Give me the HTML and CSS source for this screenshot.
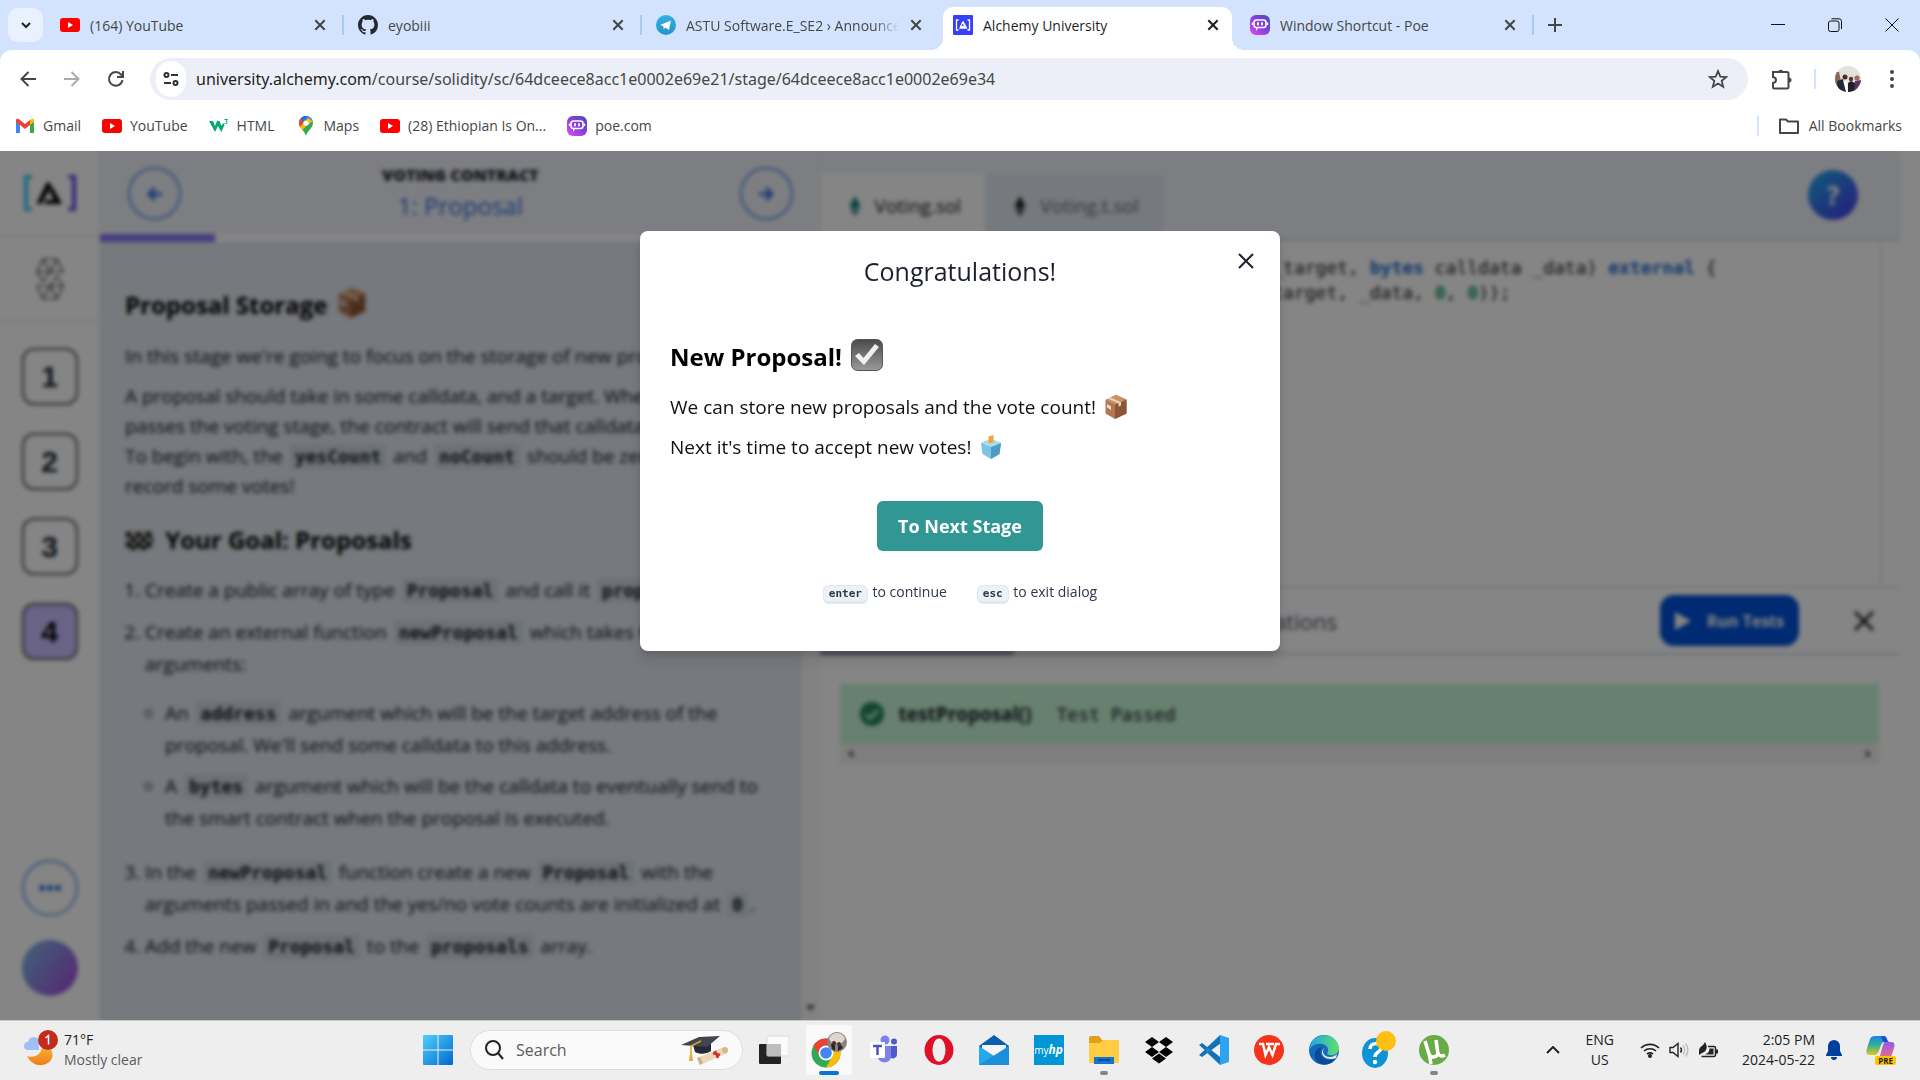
FILE: index.html
```html
<!DOCTYPE html>
<html lang="en">
<head>
<meta charset="utf-8">
<title>Alchemy University</title>
<link rel="stylesheet" href="styles.css">
</head>
<body>
<svg class="defs" aria-hidden="true">
  <defs>
    <linearGradient id="gPoe" x1="0" y1="1" x2="1" y2="0"><stop offset="0" stop-color="#e24bf5"/><stop offset=".5" stop-color="#8a3fe0"/><stop offset="1" stop-color="#4b49b8"/></linearGradient>
    <linearGradient id="gTg" x1="0" y1="0" x2="0" y2="1"><stop offset="0" stop-color="#37aee2"/><stop offset="1" stop-color="#1e96c8"/></linearGradient>
    <linearGradient id="gWin" x1="0" y1="0" x2="1" y2="1"><stop offset="0" stop-color="#4fd0fb"/><stop offset="1" stop-color="#0069d0"/></linearGradient>
    <linearGradient id="gBrk" x1="0" y1="0" x2="1" y2="0"><stop offset="0" stop-color="#35c8f5"/><stop offset="1" stop-color="#5a45e8"/></linearGradient>
    <linearGradient id="gMoon" x1="0" y1="0" x2="0" y2="1"><stop offset="0" stop-color="#f7b733"/><stop offset="1" stop-color="#ef7c1c"/></linearGradient>
    <linearGradient id="gCheck" x1="0" y1="0" x2="0" y2="1"><stop offset="0" stop-color="#4a4a4a"/><stop offset="1" stop-color="#9a9a9a"/></linearGradient>
    <linearGradient id="gEdge" x1="0" y1="0" x2="1" y2="0"><stop offset="0" stop-color="#1fa6e8"/><stop offset="1" stop-color="#5fe06a"/></linearGradient>
    <linearGradient id="gCopA" x1="0" y1="0" x2="0" y2="1"><stop offset="0" stop-color="#1583e8"/><stop offset=".5" stop-color="#35b58e"/><stop offset="1" stop-color="#e3c61b"/></linearGradient>
    <linearGradient id="gCopB" x1="0" y1="0" x2="0" y2="1"><stop offset="0" stop-color="#9a58e8"/><stop offset="1" stop-color="#f7746b"/></linearGradient>
    <symbol id="yt" viewBox="0 0 20 20"><rect y="3" width="20" height="14" rx="3" fill="#f00"/><path d="M8 7v6l5-3z" fill="#fff"/></symbol>
    <symbol id="poe" viewBox="0 0 20 20"><rect width="20" height="20" rx="6" fill="url(#gPoe)"/><rect x="4" y="5" width="12" height="7.500" rx="2.500" fill="none" stroke="#fff" stroke-width="1.600"/><path d="M2.500 7.500v2.500M17.500 7.500v2.500" stroke="#fff" stroke-width="1.400"/><path d="M6 12.500h8l-6 .5-2 3z" fill="#fff"/><path d="M8 8v1.500M12 8v1.500" stroke="#fff" stroke-width="1.800" stroke-linecap="round"/></symbol>
    <symbol id="x" viewBox="0 0 12 12"><path d="M2 2l8 8M10 2l-8 8" stroke="currentColor" stroke-width="1.800"/></symbol>
    <symbol id="package" viewBox="0 0 24 24"><path d="M12 0l10.500 4.500v14L11 24 1.500 18.500V5z" fill="#b27650"/><path d="M11 9.500L22.500 4.500v14L11 24z" fill="#8c5634"/><path d="M12 0l10.500 4.500L11 9.500 1.500 5z" fill="#c99264"/><path d="M6.500 2.500L17 7l-2.500 1.200L4 3.700zM14.500 8.200L17 7v3.600l-2.500 1.200z" fill="#e8d2b0"/><path d="M3 9l4 2.300v3.600L3 12.600z" fill="#e6e0da"/></symbol>
    <symbol id="ballot" viewBox="0 0 24 24"><path d="M12 4l10 4-1.500 11L12 24l-8.500-5L2 8z" fill="#7cc3e4"/><path d="M12 12L22 8l-1.500 11L12 24z" fill="#4c9cc9"/><path d="M12 4l10 4-10 4L2 8z" fill="#a9dcf2"/><path d="M9.500 1.500L14.500 0v7.500l-5 1z" fill="#f0a52e"/></symbol>
    <symbol id="flag" viewBox="0 0 30 24"><path d="M1 3c5-3 9 3 14 0s9-1 13 0v17c-5-2-8 2-13 0s-9-1-13 2z" fill="#bbb"/><path d="M1 3h5v5H1zM11 3h5v5h-5zM21 3h5v5h-5zM6 8h5v5H6zM16 8h5v5h-5zM1 13h5v5H1zM11 13h5v5h-5zM21 13h5v5h-5zM6 17h5v4H6zM16 17h5v4h-5zM26 8h2v5h-2z" fill="#111"/></symbol>
    <symbol id="eth" viewBox="0 0 14 22"><path d="M7 0l6 11-6 4-6-4zM1 13l6 9 6-9-6 3.500z" fill="currentColor"/></symbol>
  </defs>
</svg>

<header class="browser">
  <div class="tabstrip">
    <button class="tab-search" aria-label="Search tabs"><svg width="12" height="12" viewBox="0 0 12 12"><path d="M2 4l4 4 4-4" fill="none" stroke="#1f1f1f" stroke-width="2"/></svg></button>
    <div class="tab"><svg class="fav"><use href="#yt"/></svg><span class="tab-title">(164) YouTube</span><button class="tab-close" aria-label="Close tab"><svg width="14" height="14"><use href="#x"/></svg></button></div>
    <div class="tab"><svg class="fav" viewBox="0 0 16 16"><path fill="#24292f" d="M8 0C3.580 0 0 3.580 0 8c0 3.540 2.290 6.530 5.470 7.590.4.070.55-.17.55-.38 0-.19-.01-.82-.01-1.490-2.010.37-2.530-.49-2.690-.94-.09-.23-.48-.94-.82-1.130-.28-.15-.68-.52-.01-.53.63-.01 1.080.58 1.230.82.72 1.210 1.870.87 2.330.66.07-.52.28-.87.51-1.070-1.780-.2-3.640-.89-3.640-3.950 0-.87.31-1.590.82-2.150-.08-.2-.36-1.020.08-2.120 0 0 .67-.21 2.200.82.64-.18 1.320-.27 2-.27s1.360.09 2 .27c1.530-1.040 2.200-.82 2.200-.82.44 1.100.16 1.920.08 2.120.51.56.82 1.270.82 2.150 0 3.070-1.870 3.750-3.650 3.950.29.25.54.73.54 1.480 0 1.070-.01 1.930-.01 2.200 0 .21.15.46.55.38A8.010 8.010 0 0 0 16 8c0-4.420-3.580-8-8-8z"/></svg><span class="tab-title">eyobiii</span><button class="tab-close" aria-label="Close tab"><svg width="14" height="14"><use href="#x"/></svg></button></div>
    <div class="tab bare"><svg class="fav" viewBox="0 0 20 20"><circle cx="10" cy="10" r="10" fill="url(#gTg)"/><path d="M4 10l11-4.500-2 9.500-3.500-2.500-1.800 1.800-.4-3.300z" fill="#fff"/></svg><span class="tab-title fade">ASTU Software.E_SE2 › Announcements</span><button class="tab-close" aria-label="Close tab"><svg width="14" height="14"><use href="#x"/></svg></button></div>
    <div class="tab active"><svg class="fav" viewBox="0 0 20 20"><rect width="20" height="20" rx="1" fill="#363ff9"/><path d="M5.500 5H3.500v10h2M14.500 5h2v10h-2M10 6.500L7 13h6.500L10 6.500l1.800 5.200H8.500" fill="none" stroke="#fff" stroke-width="1.300"/></svg><span class="tab-title">Alchemy University</span><button class="tab-close" aria-label="Close tab"><svg width="14" height="14"><use href="#x"/></svg></button></div>
    <div class="tab"><svg class="fav"><use href="#poe"/></svg><span class="tab-title">Window Shortcut - Poe</span><button class="tab-close" aria-label="Close tab"><svg width="14" height="14"><use href="#x"/></svg></button></div>
    <button class="new-tab" aria-label="New tab"><svg width="14" height="14" viewBox="0 0 14 14"><path d="M7 0v14M0 7h14" stroke="#444746" stroke-width="2"/></svg></button>
    <div class="win-controls">
      <button aria-label="Minimize"><svg width="14" height="14"><path d="M0 6.500h14" stroke="#111"/></svg></button>
      <button aria-label="Restore"><svg width="14" height="14" fill="none" stroke="#111"><rect x=".5" y="3" width="10.500" height="10.500" rx="2"/><path d="M3.500 .8H11a2.500 2.500 0 0 1 2.500 2.500V11"/></svg></button>
      <button aria-label="Close"><svg width="14" height="14"><path d="M.5 .5l13 13M13.500 .5l-13 13" stroke="#111"/></svg></button>
    </div>
  </div>
  <div class="toolbar">
    <button class="tool" aria-label="Back"><svg width="16" height="16" viewBox="0 0 16 16" fill="none" stroke="#444746" stroke-width="2"><path d="M16 8H2M8.500 1L1.500 8l7 7"/></svg></button>
    <button class="tool" aria-label="Forward"><svg width="16" height="16" viewBox="0 0 16 16" fill="none" stroke="#a9abad" stroke-width="2"><path d="M0 8h14M7.500 1l7 7-7 7"/></svg></button>
    <button class="tool" aria-label="Reload"><svg width="18" height="18" viewBox="0 0 18 18" fill="none" stroke="#444746" stroke-width="2"><path d="M15.500 10A6.800 6.800 0 1 1 14 4.500l1.500 2M16 1v6h-6"/></svg></button>
    <div class="omnibox">
      <button class="site-info" aria-label="Site information"><svg width="16" height="16" viewBox="0 0 16 16" fill="none" stroke="#303134" stroke-width="2"><circle cx="3.500" cy="4" r="2"/><path d="M8 4h7M1 12h7"/><circle cx="12.500" cy="12" r="2"/></svg></button>
      <span class="url"><b>university.alchemy.com</b>/course/solidity/sc/64dceece8acc1e0002e69e21/stage/64dceece8acc1e0002e69e34</span>
      <button class="star" aria-label="Bookmark this tab"><svg width="20" height="20" viewBox="0 0 20 20"><path d="M10 2l2.300 5.600 6 .4-4.600 3.900 1.500 5.900L10 14.600l-5.200 3.200 1.500-5.900L1.700 8l6-.4z" fill="none" stroke="#444746" stroke-width="1.800"/></svg></button>
    </div>
    <button class="tool ext" aria-label="Extensions"><svg width="22" height="24" viewBox="0 0 22 24"><path d="M2 5h14a1.500 1.500 0 0 1 1.500 1.500V20a1.500 1.500 0 0 1-1.500 1.500H3A1 1 0 0 1 2 20.500V16c4-.5 4-5.500 0-6z" fill="none" stroke="#444746" stroke-width="2"/><path d="M7 4.500a3 3 0 0 1 5.500 0zM18 10.500a2.500 2.500 0 0 1 0 5z" fill="#444746"/></svg></button>
    <span class="sep"></span>
    <button class="tool" aria-label="Profile"><svg width="26" height="26" viewBox="0 0 26 26"><clipPath id="av"><circle cx="13" cy="13" r="13"/></clipPath><g clip-path="url(#av)"><rect width="26" height="26" fill="#e4e0dd"/><path d="M0 6h4l2 9v11H0z" fill="#8a665a"/><path d="M2 15l6-2 4 13H3z" fill="#23283a"/><path d="M13 17l3-2 4 2v9h-7z" fill="#1c2130"/><path d="M20 15l6-1v12h-7z" fill="#5a3558"/><path d="M8 14l2 2 2-2 1 12h-2z" fill="#fff"/><circle cx="10" cy="11" r="2.500" fill="#4a2d24"/><circle cx="16" cy="13" r="2.200" fill="#54352b"/><circle cx="22" cy="12" r="2.600" fill="#a06a5c"/></g></svg></button>
    <button class="tool" aria-label="Menu"><svg width="4" height="18" fill="#444746"><circle cx="2" cy="2" r="2"/><circle cx="2" cy="9" r="2"/><circle cx="2" cy="16" r="2"/></svg></button>
  </div>
  <nav class="bookmarks">
    <a href="#"><svg class="bm" viewBox="0 0 20 20"><path d="M1 4.500V17h4V8.500z" fill="#4285f4"/><path d="M19 4.500V17h-4V8.500z" fill="#34a853"/><path d="M1 4.500C1 2.500 3 2.300 5 4l5 4 5-4v5l-5 4-5-4L1 6z" fill="#ea4335"/><path d="M15 4c2-1.700 4-1.500 4 .5V6l-4 3z" fill="#fbbc04"/></svg>Gmail</a>
    <a href="#"><svg class="bm"><use href="#yt"/></svg>YouTube</a>
    <a href="#"><svg class="bm" viewBox="0 0 20 20"><path d="M0 5h4l2 5 2-5h2.500l2 5 1.500-3 1.500 2-3.200 7-3.300-6-3 6z" fill="#04aa6d"/><path d="M15.500 3.500h3l-1.500 2c2.200.2 1.500 3-1.500 2" fill="none" stroke="#04aa6d"/></svg>HTML</a>
    <a href="#"><svg class="bm" viewBox="0 0 20 20"><path d="M10 20C9 15 3 12 3 7a7 7 0 0 1 14 0c0 5-6 8-7 13z" fill="#34a853"/><path d="M10 0a7 7 0 0 1 6.500 4.500L10 12z" fill="#4285f4"/><path d="M4.500 2.500A7 7 0 0 1 12 .3L7 6z" fill="#1a73e8"/><path d="M4.500 2.500L8 6l-4 5C2.500 8 2.500 5 4.500 2.500z" fill="#ea4335"/><path d="M4 11l8-9 4.500 3L6 14z" fill="#fbbc04"/><circle cx="10" cy="7" r="2.600" fill="#fff"/></svg>Maps</a>
    <a href="#"><svg class="bm"><use href="#yt"/></svg>(28) Ethiopian Is On...</a>
    <a href="#"><svg class="bm"><use href="#poe"/></svg>poe.com</a>
    <a href="#" class="all"><svg class="bm" viewBox="0 0 20 20"><path d="M1 3.500h6l2 2h10V17H1z" fill="none" stroke="#444746" stroke-width="2" stroke-linejoin="round"/></svg>All Bookmarks</a>
  </nav>
</header>

<main class="page">
  <aside class="rail">
    <a class="rail-cell" href="#" aria-label="Alchemy"><svg width="52" height="36" viewBox="0 0 52 36"><path d="M8 1.500H2v33h6M44 1.500h6v33h-6" fill="none" stroke="url(#gBrk)" stroke-width="4"/><path d="M26 7l-3.500 1L12.500 29h5L27 12zM28 11l10 18H20l2-4h8l-4.500-9z" fill="#000"/></svg></a>
    <div class="rail-cell"><svg width="28" height="42" viewBox="0 0 28 42" fill="none" stroke="#333" stroke-width="1.200"><path d="M7 1h14l6 13H1zM1 14l6 10L14 14 7 1M14 14l7-13M7 1l7 13h13M1 28h26l-6 13H7zM27 28l-6-10-7 10 7 13M14 28L7 41"/></svg></div>
    <button class="step">1</button>
    <button class="step">2</button>
    <button class="step">3</button>
    <button class="step current">4</button>
    <button class="more" aria-label="More"><svg width="24" height="8" fill="#2b6de0"><circle cx="4" cy="4" r="3"/><circle cx="12" cy="4" r="3"/><circle cx="20" cy="4" r="3"/></svg></button>
    <button class="account" aria-label="Account"></button>
  </aside>

  <section class="lesson">
    <header class="lesson-head">
      <button class="round" aria-label="Previous"><svg width="16" height="16" viewBox="0 0 16 16" fill="none" stroke="currentColor" stroke-width="3"><path d="M15 8H3M8 2L2 8l6 6"/></svg></button>
      <div class="lesson-title"><p class="eyebrow">VOTING CONTRACT</p><h1>1: Proposal</h1></div>
      <button class="round" aria-label="Next"><svg width="16" height="16" viewBox="0 0 16 16" fill="none" stroke="currentColor" stroke-width="3"><path d="M1 8h12M8 2l6 6-6 6"/></svg></button>
    </header>
    <div class="progress"><div class="progress-bar"></div></div>
    <div class="lesson-body">
      <article>
        <h2>Proposal Storage <svg class="after" width="30" height="30"><use href="#package"/></svg></h2>
        <p>In this stage we're going to focus on the storage of new proposals.</p>
        <p>A proposal should take in some calldata, and a target. When a proposal<br>passes the voting stage, the contract will send that calldata on.<br>To begin with, the <code>yesCount</code> and <code>noCount</code> should be zero until we<br>record some votes!</p>
        <h2><svg class="before" width="30" height="24"><use href="#flag"/></svg> Your Goal: Proposals</h2>
        <ol>
          <li>Create a public array of type <code>Proposal</code> and call it <code>proposals</code>.</li>
          <li>Create an external function <code>newProposal</code> which takes two<br>arguments:
            <ul>
              <li>An <code>address</code> argument which will be the target address of the<br>proposal. We'll send some calldata to this address.</li>
              <li>A <code>bytes</code> argument which will be the calldata to eventually send to<br>the smart contract when the proposal is executed.</li>
            </ul>
          </li>
          <li>In the <code>newProposal</code> function create a new <code>Proposal</code> with the<br>arguments passed in and the yes/no vote counts are initialized at <code>0</code>.</li>
          <li>Add the new <code>Proposal</code> to the <code>proposals</code> array.</li>
        </ol>
      </article>
      <div class="track"><svg width="9" height="6" fill="#505050"><path d="M0 0h9L4.500 6z"/></svg></div>
    </div>
  </section>

  <section class="workbench">
    <header class="files">
      <button class="file open"><svg width="14" height="20"><use href="#eth"/></svg>Voting.sol</button>
      <button class="file"><svg width="14" height="20"><use href="#eth"/></svg>Voting.t.sol</button>
      <button class="help" aria-label="Help">?</button>
    </header>
    <pre class="editor">    function newProposal(address _target, <b>bytes</b> calldata _data) <b>external</b> {
        proposals.push(Proposal(_target, _data, <i>0</i>, <i>0</i>));
    }</pre>
    <div class="console-head">
      <button class="ctab selected">Tests</button>
      <button class="ctab">Explanations</button>
      <button class="run"><svg width="16" height="18" fill="#fff"><path d="M0 0l16 9-16 9z"/></svg>Run Tests</button>
      <button class="console-close" aria-label="Close console"><svg width="20" height="20"><path d="M1 1l18 18M19 1L1 19" stroke="#222" stroke-width="3"/></svg></button>
    </div>
    <div class="results">
      <div class="result"><svg width="24" height="24"><circle cx="12" cy="12" r="12" fill="#25855a"/><path d="M6 12.500l4 4 8-8" fill="none" stroke="#c6f6d5" stroke-width="3"/></svg><strong>testProposal()</strong><span>Test Passed</span></div>
      <div class="hscroll"><svg width="5" height="8" fill="#555"><path d="M5 0v8L0 4z"/></svg><svg width="5" height="8" fill="#555"><path d="M0 0v8l5-4z"/></svg></div>
    </div>
  </section>

  <div class="overlay">
    <section class="modal" role="dialog" aria-labelledby="dlg">
      <button class="modal-close" aria-label="Close"><svg width="16" height="16"><path d="M1 1l14 14M15 1L1 15" stroke="#1a202c" stroke-width="2"/></svg></button>
      <h2 id="dlg" class="modal-title">Congratulations!</h2>
      <h3>New Proposal! <svg class="after" width="32" height="32" viewBox="0 0 32 32"><rect x=".5" y=".5" width="31" height="31" rx="6" fill="url(#gCheck)" stroke="#555"/><path d="M4 17l4-3 4.500 5L24 5l4 3-15 18z" fill="#f0f0f0"/></svg></h3>
      <p>We can store new proposals and the vote count! <svg class="after" width="24" height="24"><use href="#package"/></svg></p>
      <p>Next it's time to accept new votes! <svg class="after" width="24" height="24"><use href="#ballot"/></svg></p>
      <button class="next">To Next Stage</button>
      <div class="hints"><span><kbd>enter</kbd> to continue</span><span><kbd>esc</kbd> to exit dialog</span></div>
    </section>
  </div>
</main>

<footer class="taskbar">
  <div class="weather">
    <svg width="36" height="40" viewBox="0 0 36 40"><path d="M3 26c3 2 14 1 15-9 7-3 14 6 9 13s-18 8-24-4z" fill="url(#gMoon)"/><path d="M4 20a4 4 0 0 1 0-8 6 6 0 0 1 11-2v10z" fill="#9fc0f3"/><circle cx="24" cy="10" r="10" fill="#c42b1c"/><path d="M21.500 8L24.500 5.500V14.500" fill="none" stroke="#fff" stroke-width="1.500"/></svg>
    <div class="weather-text"><span>71°F</span><span class="muted">Mostly clear</span></div>
  </div>
  <div class="dock">
    <button class="app" aria-label="Start"><svg width="30" height="30" fill="url(#gWin)"><path d="M0 1a1 1 0 0 1 1-1h28a1 1 0 0 1 1 1v28a1 1 0 0 1-1 1H1a1 1 0 0 1-1-1z"/><path d="M14.500 0h1v30h-1zM0 14.500h30v1H0z" fill="#eee"/></svg></button>
    <label class="search"><svg width="20" height="20" fill="none" stroke="#222" stroke-width="2"><circle cx="9" cy="8" r="7"/><path d="M14 13l5 6"/></svg><input type="text" placeholder="Search" aria-label="Search">
      <svg width="48" height="32" viewBox="0 0 48 32"><path d="M12 11l2 7c5 3 12 2 16-1V9z" fill="#262a33"/><path d="M0 11L18 3l21-1-13 11z" fill="#41454f"/><path d="M20 7L10 12v12" fill="none" stroke="#e0a42a" stroke-width="1.500"/><path d="M9 20l2 0 1 7H8z" fill="#e7ac2d"/><path d="M16 24l27-11 4 6-28 12z" fill="#ead9b9"/><path d="M16 24l3-1 3 6-3 2z" fill="#cbb184"/><circle cx="44" cy="16" r="3" fill="#d3b88e"/><path d="M34 17l3 7M32 19l7 2" stroke="#d92c2c" stroke-width="2.500"/></svg></label>
    <button class="app" aria-label="Task view"><svg width="30" height="30"><rect y="9" width="22" height="20" rx="1" fill="#222"/><rect x="8" y="1" width="22" height="20" rx="1" fill="#fafafa" stroke="#ddd"/><path d="M8 9h14v12H8z" fill="#bdbdbd"/></svg></button>
    <button class="app focused" aria-label="Chrome"><svg width="36" height="36" viewBox="0 0 36 36"><circle cx="15" cy="21" r="14.500" fill="#34a853"/><path d="M2.400 13.800A14.500 14.500 0 0 1 27.600 13.800H15L8.800 24.500z" fill="#ea4335"/><path d="M27.600 13.800A14.500 14.500 0 0 1 15 35.500l6.300-11L22 14z" fill="#fbbc04"/><circle cx="15" cy="21" r="7.500" fill="#fff"/><circle cx="15" cy="21" r="5.800" fill="#4285f4"/><circle cx="26" cy="10" r="10" fill="#8b807b"/><path d="M18 7c2-8 14-8 16 0l-3 4H21z" fill="#dbd6d2"/><path d="M20 12h4v7l-3-2zM27 13h3l2 3-5 3z" fill="#222634"/><circle cx="23" cy="11" r="2" fill="#4a2d24"/><circle cx="28" cy="12" r="2" fill="#54352b"/></svg></button>
    <button class="app" aria-label="Teams"><svg width="28" height="30" viewBox="0 0 28 30"><circle cx="15" cy="5" r="4.500" fill="#7b83eb"/><circle cx="24" cy="6.500" r="3" fill="#5059c9"/><path d="M19 11h8v9a4 4 0 0 1-7 2z" fill="#5059c9"/><path d="M8 11h13v12a7 7 0 0 1-13 0z" fill="#7b83eb"/><rect y="7" width="15" height="16" rx="1" fill="#fff"/><path d="M3 11h9M7.500 11v9" stroke="#4b53bc" stroke-width="2.500"/></svg></button>
    <button class="app" aria-label="Opera"><svg width="30" height="30"><ellipse cx="15" cy="15" rx="14.500" ry="15" fill="#e0102a"/><ellipse cx="15" cy="15" rx="6.500" ry="11.500" fill="#eee"/></svg></button>
    <button class="app" aria-label="Mail"><svg width="30" height="30"><path d="M0 11L15 0l15 11v4H0z" fill="#0a5fb0"/><path d="M3 10h24v10H3z" fill="#f5f5f5"/><path d="M0 11l15 10 15-10v19H0z" fill="#27a8ea"/><path d="M0 30L30 11v19z" fill="#1b8fdc"/></svg></button>
    <button class="app hp" aria-label="myHP"><span>my<em>hp</em></span></button>
    <button class="app running" aria-label="File Explorer"><svg width="30" height="30"><path d="M0 3a2 2 0 0 1 2-2h8l3 4h17v23H0z" fill="#e0a019"/><path d="M0 8h11l3-3h16v23H0z" fill="#ffcc44"/><path d="M5 22h20v7H5z" fill="#1672cf"/><path d="M9 25h12" stroke="#0b4f9c" stroke-width="2"/></svg></button>
    <button class="app" aria-label="Dropbox"><svg width="30" height="28" fill="#000"><path d="M8 1l7 5-7 5-7-5zM22 1l7 5-7 5-7-5zM8 11l7 5-7 5-7-5zM22 11l7 5-7 5-7-5zM15 17.500l7 5-7 5-7-5z"/></svg></button>
    <button class="app" aria-label="Visual Studio Code"><svg width="30" height="30"><path d="M21 0L5 15l16 15v-8l-9-7 9-7z" fill="#1b84cc"/><path d="M0 10l3-2 19 15v6zM0 20l3 2L22 8V1z" fill="#1470b3"/><path d="M21 0l9 3v24l-9 3z" fill="#2fa4ee"/></svg></button>
    <button class="app" aria-label="WPS Office"><svg width="30" height="30"><circle cx="15" cy="15" r="15" fill="#f5351b"/><path d="M5 9h4l2.500 11L15 12l3.500 8L22 9h4M12 9h8" fill="none" stroke="#fff" stroke-width="2.500"/></svg></button>
    <button class="app" aria-label="Edge"><svg width="30" height="30"><circle cx="15" cy="15" r="15" fill="#1569bd"/><path d="M1 11C5-3 27-4 30 13c0 7-8 9-12 6 3-5 0-9-5-10S3 10 1 14z" fill="url(#gEdge)"/><path d="M13 12c-4 6 0 14 9 13 2 0 4-1 5-2-5 8-16 8-20 2-3-6 0-12 6-13z" fill="#0b4a95"/><path d="M16 13c-4 2-2 9 5 9 3 0 6-2 7-3l-1 4c-5 2-13 1-14-5 0-3 1-4 3-5z" fill="#eee"/></svg></button>
    <button class="app" aria-label="HP Support"><svg width="36" height="38" viewBox="0 0 36 38"><ellipse cx="14" cy="22" rx="13" ry="15" fill="#0f93d5"/><path d="M9 18c0-7 11-7 11-1 0 4-6 4-6 9" fill="none" stroke="#fff" stroke-width="3.500"/><circle cx="14" cy="31" r="2.200" fill="#fff"/><circle cx="25" cy="10" r="10" fill="#ffbf12"/></svg></button>
    <button class="app running" aria-label="uTorrent"><svg width="30" height="30"><circle cx="15" cy="15" r="15" fill="#6aab45"/><path d="M6 6l4 13c1 4 7 4 9 0L17 5M19 18c1 3 4 4 7 2M10 18l2 11" fill="none" stroke="#fff" stroke-width="3.500"/></svg></button>
  </div>
  <div class="tray">
    <svg width="14" height="8" fill="none" stroke="#222" stroke-width="2"><path d="M1 7l6-6 6 6"/></svg>
    <div class="lang"><span>ENG</span><span>US</span></div>
    <div class="status">
      <svg width="20" height="16" fill="none" stroke="#222" stroke-width="1.600"><path d="M1 6a13 13 0 0 1 18 0M4 9a9 9 0 0 1 12 0M7 12a5 5 0 0 1 6 0"/><circle cx="10" cy="14" r="1.200" fill="#222"/></svg>
      <svg width="20" height="16" fill="none" stroke="#222" stroke-width="1.400"><path d="M1 5.500h3l5-4v13l-5-4H1zM11.500 5.500a4 4 0 0 1 0 5"/><path d="M14 3.500a7 7 0 0 1 0 9M16.500 1.500a10 10 0 0 1 0 13" stroke="#bbb"/></svg>
      <svg width="20" height="18"><path d="M10 5.500h6a1.500 1.500 0 0 1 1.500 1.500v7a1.500 1.500 0 0 1-1.500 1.500H3.500" fill="none" stroke="#222" stroke-width="1.500"/><path d="M18 8.500h2v4h-2zM1 10c0-5 4-4 6-9 3 5 2 9-3 11l-3 2zM11.500 7.500h4v6H7c3-1 4.500-3 4.500-6z" fill="#222"/></svg>
    </div>
    <div class="clock"><span>2:05 PM</span><span>2024-05-22</span></div>
    <svg class="bell" width="16" height="20" fill="#003f9e"><path d="M8 0a6 6 0 0 1 6 6v5l2 4v1H0v-1l2-4V6a6 6 0 0 1 6-6zM5 17h6a3 3 0 0 1-6 0z"/></svg>
    <div class="copilot"><svg width="30" height="26" viewBox="0 0 30 26"><path d="M9 1h8c5 0 3 6 6 6h-5c-4 0-4 13-9 13H4C0 20 0 17 1 13l3-9c1-2 2-3 5-3z" fill="url(#gCopA)"/><path d="M15 1h3c3 0 3 5 5 6h-6z" fill="#1c4fd0"/><path d="M19 7h6c4 0 4 3 3 6l-3 9c-1 2-3 4-6 4H10c5 0 6-19 9-19z" fill="url(#gCopB)"/></svg><span>PRE</span></div>
  </div>
</footer>
</body>
</html>
```
FILE: styles.css
```css
* { box-sizing: border-box; }
body {
  margin: 0;
  min-height: 100vh;
  display: flex;
  flex-direction: column;
  font-family: "Open Sans", "Noto Sans", sans-serif;
  color: #1a202c;
}
button { font: inherit; color: inherit; border: 0; padding: 0; background: none; }
a { color: inherit; text-decoration: none; }
h1, h2, h3, p { margin: 0; }
svg { flex: none; }
.defs { position: absolute; width: 0; height: 0; }
.after { margin-left: 3px; }
.before { margin-right: 4px; }

/* browser */
.browser { background: #d3e3fd; color: #444746; }
.tabstrip { display: flex; align-items: center; height: 50px; padding-left: 8px; }
.tab-search { width: 35px; height: 34px; margin-right: 3px; border-radius: 10px; background: #e9f1fe; display: grid; place-items: center; }
.tab { display: flex; align-items: center; gap: 10px; width: 298px; height: 42px; padding: 0 17px 0 14px; font-size: 14px; position: relative; }
.tab::after { content: ""; position: absolute; right: 0; top: 11px; width: 2px; height: 20px; background: #a8c7fa; }
.tab.bare::after, .tab.active::after { display: none; }
.tab.active { align-self: flex-end; width: 289px; height: 43px; margin: 0 4px 0 3px; padding: 0 12px 7px 10px; border-radius: 10px 10px 0 0; background: #fff; color: #1f1f1f; }
.tab.active::before { content: ""; position: absolute; left: -12px; right: -12px; bottom: 0; height: 12px; background: radial-gradient(circle at 0 0, transparent 12px, #fff 12px) left / 12px 12px no-repeat, radial-gradient(circle at 100% 0, transparent 12px, #fff 12px) right / 12px 12px no-repeat; }
.fav { width: 20px; height: 20px; }
.tab-title { flex: 1; overflow: hidden; white-space: nowrap; }
.tab-title.fade { -webkit-mask: linear-gradient(90deg, #000 88%, transparent); mask: linear-gradient(90deg, #000 88%, transparent); }
.tab-close { width: 14px; height: 14px; display: grid; }
.new-tab { width: 42px; display: grid; place-items: center; }
.win-controls { margin-left: auto; display: flex; }
.win-controls button { width: 57px; height: 34px; display: grid; place-items: center; }
.toolbar { display: flex; align-items: center; height: 58px; padding: 0 6px; background: #fff; border-radius: 12px 12px 0 0; }
.tool { width: 44px; height: 40px; display: grid; place-items: center; }
.omnibox { flex: 1; display: flex; align-items: center; height: 42px; margin-left: 12px; padding: 0 20px 0 6px; border-radius: 21px; background: #edeff8; }
.site-info { width: 30px; height: 36px; border-radius: 18px; background: #fff; display: grid; place-items: center; }
.url { margin-left: 10px; font-family: "Noto Sans", sans-serif; font-size: 16px; flex: 1; white-space: nowrap; overflow: hidden; }
.url b { font-weight: 400; color: #1f1f1f; }
.star { width: 20px; height: 20px; }
.ext { margin-left: 12px; }
.sep { width: 2px; height: 20px; margin: 0 10px; background: #d3e3fd; }
.bookmarks { display: flex; align-items: center; gap: 21px; height: 43px; padding: 0 18px 8px 15px; background: #fff; font-size: 14px; white-space: nowrap; }
.bookmarks a { display: flex; align-items: center; gap: 8px; }
.bm { width: 20px; height: 20px; }
.bookmarks .all { margin-left: auto; gap: 10px; padding-left: 20px; border-left: 2px solid #d3e3fd; }

/* course page */
.page { flex: 1; position: relative; display: grid; grid-template-columns: 100px minmax(0, 2fr) minmax(0, 3fr) 21px; background: #fff; overflow: hidden; }
.rail { display: flex; flex-direction: column; align-items: center; padding: 0 0 24px; border-right: 1px solid #e9edf5; }
.rail-cell { width: 100%; height: 86px; display: grid; place-items: center; border-bottom: 2px solid #e6ebf5; }
.step { width: 56px; height: 57px; margin-top: 28px; border: 2px solid #555; border-radius: 12px; font: 700 30px "Liberation Sans", Arial, sans-serif; color: #1a202c; }
.rail-cell + .step { margin-top: 25px; }
.step.current { background: #c9bfff; color: #000; }
.more { width: 56px; height: 56px; margin-top: auto; border: 2px solid #6a9ce4; border-radius: 50%; display: grid; place-items: center; }
.account { width: 56px; height: 56px; margin-top: 24px; border-radius: 50%; background: linear-gradient(125deg, #79bfe6, #a646e0); }

.lesson { display: flex; flex-direction: column; background: #e2e8f0; }
.lesson-head { display: flex; align-items: center; justify-content: space-between; height: 83px; padding: 2px 27px 0 28px; background: #f0f2f9; }
.round { width: 53px; height: 53px; border: 2px solid #5c94ea; border-radius: 50%; color: #2b6de0; display: grid; place-items: center; }
.lesson-title { text-align: center; }
.eyebrow { font-weight: 800; font-size: 16px; line-height: 24px; }
.lesson-title h1 { font-weight: 400; font-size: 24px; line-height: 38px; color: #2f6fd6; }
.progress { height: 8px; background: #fff; }
.progress-bar { width: 16%; height: 8px; background: #8875f5; }
.lesson-body { flex: 1; display: flex; }
article { flex: 1; min-width: 0; padding: 45px 0 40px 25px; font-size: 19px; line-height: 30px; white-space: nowrap; overflow: hidden; }
article h2 { font-size: 24px; line-height: 36px; margin-bottom: 18px; color: #000; }
article h2 svg { vertical-align: -4px; }
article p { margin-bottom: 10px; }
article p + h2 { margin: 21px 0 16px; }
article code { margin: 0 2px; padding: 2px 5px; border-radius: 3px; background: #d3dae4; font: 700 18px/20px "DejaVu Sans Mono", monospace; }
article ol { margin: 0; padding-left: 20px; line-height: 32px; }
article ol > li { margin-bottom: 10px; }
article ul { margin: 17px 0 22px; padding-left: 20px; list-style: circle; }
article ul li { margin-bottom: 9px; }
.track { width: 18px; background: #fafafa; display: flex; align-items: flex-end; justify-content: center; padding-bottom: 9px; }

.workbench { display: flex; flex-direction: column; min-width: 0; }
.files { display: flex; align-items: flex-end; height: 87px; background: #f0f2f9; box-shadow: 0 2px 3px #c8cdd5; }
.file { display: flex; align-items: center; gap: 13px; height: 64px; padding: 0 24px 0 28px; background: #e2e8f0; color: #667080; font-size: 19px; }
.file.open { background: #fff; color: #1a202c; }
.file svg { color: #222; }
.file.open svg { color: #128073; }
.help { width: 50px; height: 50px; margin: 0 41px 18px auto; border-radius: 50%; background: linear-gradient(140deg, #1fb0ee, #4a35e8); color: #fff; font-weight: 700; font-size: 26px; }
.editor { flex: 0 0 342px; margin: 6px 17px 0 0; padding: 11px 0 0 95px; border-right: 2px solid #e4e7ec; font: 18px/25px "DejaVu Sans Mono", monospace; overflow: hidden; color: #222; }
.editor b { color: #1f6bd0; }
.editor i { color: #1f9c6b; font-style: normal; font-weight: 700; }
.console-head { display: flex; align-items: center; height: 69px; padding-right: 25px; border-top: 2px solid #dce2e8; border-bottom: 2px solid #ccd6ea; }
.ctab { width: 194px; height: 68px; font-size: 22px; color: #4a5568; }
.ctab + .ctab { width: auto; margin-left: 192px; }
.ctab.selected { border-bottom: 4px solid #718096; }
.run { display: flex; align-items: center; gap: 16px; height: 51px; margin-left: auto; padding: 0 15px; border-radius: 14px; background: #0052d9; color: #fff; font-weight: 700; font-size: 16px; }
.console-close { margin-left: 55px; height: 20px; }
.results { padding: 29px 20px 0; }
.result { display: flex; align-items: center; gap: 15px; height: 60px; padding-left: 20px; background: #c6f6d5; font-size: 19px; }
.result span { margin-left: 10px; font: 18px "DejaVu Sans Mono", monospace; }
.hscroll { display: flex; justify-content: space-between; align-items: center; height: 20px; padding: 0 8px; background: #f1f1f1; }

/* dialog lies over the page */
.overlay { position: absolute; inset: 0; display: flex; justify-content: center; align-items: flex-start; padding-top: 80px; background: rgba(0, 0, 0, .48); backdrop-filter: blur(2px); }
.modal { position: relative; width: 640px; padding: 16px 30px 43px; border-radius: 8px; background: #fff; box-shadow: 0 10px 15px rgba(0, 0, 0, .1), 0 4px 6px rgba(0, 0, 0, .1); font-size: 19px; line-height: 32px; color: #111; white-space: nowrap; }
.modal-close { position: absolute; right: 26px; top: 22px; height: 16px; line-height: 0; }
.modal-title { text-align: center; font-weight: 400; font-size: 25px; line-height: 48px; color: #1a202c; }
.modal h3 { margin: 44px 0 16px; font-size: 24px; line-height: 36px; color: #000; }
.modal svg { vertical-align: -5px; }
.modal p { margin-bottom: 8px; }
.next { display: block; height: 50px; margin: 38px auto 0; padding: 0 21px; border-radius: 6px; background: #319795; color: #fff; font-weight: 700; font-size: 18px; }
.hints { display: flex; justify-content: center; gap: 30px; margin-top: 25px; font-size: 14px; color: #2d3748; }
.hints kbd { margin-right: 1px; padding: 1px 5px; border: 1px solid #e2e8f0; border-bottom-width: 3px; border-radius: 6px; background: #edf2f7; font: 700 11px "DejaVu Sans Mono", monospace; }

/* taskbar */
.taskbar { display: grid; grid-template-columns: 410px auto 1fr; align-items: center; height: 60px; padding-bottom: 1px; border-top: 1px solid #c9c9c9; background: #eee; font-size: 14px; line-height: 20px; color: #222; }
.weather { display: flex; gap: 4px; padding-left: 24px; }
.weather-text, .lang, .clock { display: flex; flex-direction: column; }
.muted { color: #5c5c5c; }
.dock { display: flex; align-items: center; }
.app { position: relative; width: 55px; height: 50px; display: grid; place-items: center; }
.focused { background: linear-gradient(#f9f9f9, #f9f9f9) center / 46px 50px no-repeat; }
.focused::after, .running::after { content: ""; position: absolute; left: 24px; bottom: 0; width: 8px; height: 4px; border-radius: 2px; background: #858585; }
.focused::after { left: 18px; width: 20px; background: #0a74d4; }
.search { display: flex; align-items: center; gap: 10px; width: 273px; height: 40px; margin: 0 3px 0 5px; padding: 0 13px; border: 1px solid #ddd; border-radius: 20px; background: #fafafa; }
.search input { flex: 1; min-width: 0; border: 0; background: none; font: 16px "Open Sans", sans-serif; padding: 0 0 0 2px; }
.search input::placeholder { color: #5c5c5c; }
.hp span { width: 30px; height: 30px; background: #0096d6; color: #fff; font-size: 10px; line-height: 30px; }
.hp em { font-weight: 700; font-size: 12px; }
.tray { display: flex; align-items: center; justify-content: flex-end; padding-right: 24px; }
.lang { align-items: center; margin: 0 26px 0 25px; }
.status { display: flex; align-items: center; gap: 9px; }
.clock { align-items: flex-end; margin: 0 11px 0 24px; }
.copilot { position: relative; height: 30px; margin-left: 24px; }
.copilot span { position: absolute; right: 0; bottom: 0; padding: 0 3px; border-radius: 2px; background: #ffc400; font-weight: 700; font-size: 8px; line-height: 9px; }
```
